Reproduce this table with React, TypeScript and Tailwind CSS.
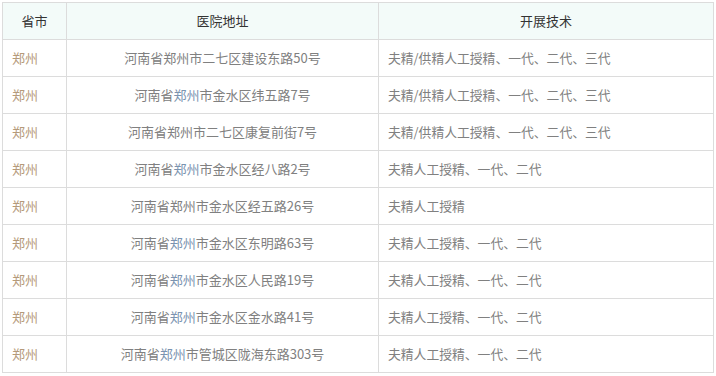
import React from "react";

type Row = { addr: [string, string, string]; blue: boolean; tech: string };

const rows: Row[] = [
  { addr: ["河南省", "郑州", "市二七区建设东路50号"], blue: false, tech: "夫精/供精人工授精、一代、二代、三代" },
  { addr: ["河南省", "郑州", "市金水区纬五路7号"], blue: true, tech: "夫精/供精人工授精、一代、二代、三代" },
  { addr: ["河南省", "郑州", "市二七区康复前街7号"], blue: false, tech: "夫精/供精人工授精、一代、二代、三代" },
  { addr: ["河南省", "郑州", "市金水区经八路2号"], blue: true, tech: "夫精人工授精、一代、二代" },
  { addr: ["河南省", "郑州", "市金水区经五路26号"], blue: false, tech: "夫精人工授精" },
  { addr: ["河南省", "郑州", "市金水区东明路63号"], blue: true, tech: "夫精人工授精、一代、二代" },
  { addr: ["河南省", "郑州", "市金水区人民路19号"], blue: true, tech: "夫精人工授精、一代、二代" },
  { addr: ["河南省", "郑州", "市金水区金水路41号"], blue: true, tech: "夫精人工授精、一代、二代" },
  { addr: ["河南省", "郑州", "市管城区陇海东路303号"], blue: true, tech: "夫精人工授精、一代、二代" },
];

export default function App() {
  return (
    <div
      className="w-[716px] h-[376px] bg-white p-[2px]"
      style={{ fontFamily: '"Noto Sans CJK SC", "Noto Sans", sans-serif' }}
    >
      <table className="w-[711px] border-collapse text-[13px] table-fixed">
        <colgroup>
          <col className="w-[64px]" />
          <col className="w-[312px]" />
          <col className="w-[335px]" />
        </colgroup>
        <thead>
          <tr className="h-[37px] bg-[#f3fbf9]">
            <th className="border border-[#dcdcdc] font-normal text-[#333] text-center p-0">省市</th>
            <th className="border border-[#dcdcdc] font-normal text-[#333] text-center p-0">医院地址</th>
            <th className="border border-[#dcdcdc] font-normal text-[#333] text-center p-0">开展技术</th>
          </tr>
        </thead>
        <tbody>
          {rows.map((r, i) => (
            <tr key={i} className="h-[37px]">
              <td className="border border-[#dcdcdc] pl-[9px] text-[#b59a7a]">郑州</td>
              <td className="border border-[#dcdcdc] text-center text-[#808080]">
                {r.addr[0]}
                <span className={r.blue ? "text-[#7a93b0]" : ""}>{r.addr[1]}</span>
                {r.addr[2]}
              </td>
              <td className="border border-[#dcdcdc] pl-[9px] text-[#808080] text-[12.8px]">{r.tech}</td>
            </tr>
          ))}
        </tbody>
      </table>
    </div>
  );
}
